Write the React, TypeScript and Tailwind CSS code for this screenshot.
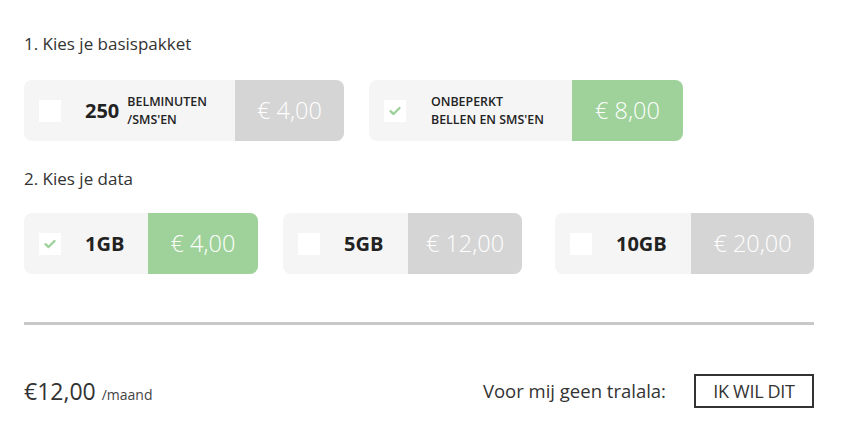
import React from 'react';

type Opt = {
  key: string;
  left: number;
  price: number;
  amount: string;
  checked: boolean;
  big?: string;
  small?: string[];
};

function Check({ checked }: { checked: boolean }) {
  return (
    <div className="w-[22px] h-[22px] bg-white shrink-0 flex items-center justify-center">
      {checked && (
        <svg width="12" height="10" viewBox="0 0 12 10">
          <path d="M1.5 5.2 L4.5 8 L10.5 2" fill="none" stroke="#9ed29a" strokeWidth="2.4" strokeLinecap="round" strokeLinejoin="round" />
        </svg>
      )}
    </div>
  );
}

function Card({ o }: { o: Opt }) {
  return (
    <div className="flex h-[61px] rounded-lg overflow-hidden bg-[#f5f5f5]">
      <div className="flex items-center pl-[15px]" style={{ width: o.left }}>
        <Check checked={o.checked} />
        <div className="ml-[24px] flex items-center">
          {o.big && <span className="text-[20px] font-bold text-[#222]">{o.big}</span>}
          {o.small && (
            <div className={`${o.big ? 'ml-[8px]' : 'ml-[1px]'} flex flex-col text-[12.4px] font-semibold leading-[18px] text-[#222]`}>
              {o.small.map((s) => (
                <span key={s}>{s}</span>
              ))}
            </div>
          )}
        </div>
      </div>
      <div
        className={`flex items-center justify-center text-[23.5px] font-light text-white ${o.checked ? 'bg-[#9ed29a]' : 'bg-[#d5d5d5]'}`}
        style={{ width: o.price }}
      >
        {o.amount}
      </div>
    </div>
  );
}

const basis: Opt[] = [
  { key: 'b1', left: 211, price: 109, amount: '€ 4,00', checked: false, big: '250', small: ['BELMINUTEN', "/SMS'EN"] },
  { key: 'b2', left: 203, price: 111, amount: '€ 8,00', checked: true, small: ['ONBEPERKT', "BELLEN EN SMS'EN"] },
];

const data: Opt[] = [
  { key: 'd1', left: 124, price: 110, amount: '€ 4,00', checked: true, big: '1GB' },
  { key: 'd2', left: 125, price: 114, amount: '€ 12,00', checked: false, big: '5GB' },
  { key: 'd3', left: 136, price: 123, amount: '€ 20,00', checked: false, big: '10GB' },
];

export default function App() {
  return (
    <div className="w-[857px] h-[436px] bg-white text-[#333] px-[24px] pt-[32px]" style={{ fontFamily: '"Open Sans", sans-serif' }}>
      <div className="w-[790px]">
        <h2 className="text-[17px] leading-[24px]">1. Kies je basispakket</h2>
        <div className="flex gap-[25px] mt-[24px]">
          {basis.map((o) => (
            <Card key={o.key} o={o} />
          ))}
        </div>

        <h2 className="text-[17px] leading-[24px] mt-[26px]">2. Kies je data</h2>
        <div className="flex mt-[22px]">
          <Card o={data[0]} />
          <div className="ml-[25px]">
            <Card o={data[1]} />
          </div>
          <div className="ml-[33px]">
            <Card o={data[2]} />
          </div>
        </div>

        <div className="h-[3px] bg-[#c8c8c8] mt-[48px]" />

        <div className="flex items-center justify-between mt-[49px]">
          <div className="flex items-baseline">
            <span className="text-[23px] text-[#333]">€12,00</span>
            <span className="text-[14px] ml-[6px] text-[#444]">/maand</span>
          </div>
          <div className="flex items-center">
            <span className="text-[18.5px] text-[#333]">Voor mij geen tralala:</span>
            <button className="ml-[28px] w-[120px] h-[34px] border-2 border-[#333] text-[18px] text-[#333] flex items-center justify-center tracking-[-0.3px]">
              IK WIL DIT
            </button>
          </div>
        </div>
      </div>
    </div>
  );
}
